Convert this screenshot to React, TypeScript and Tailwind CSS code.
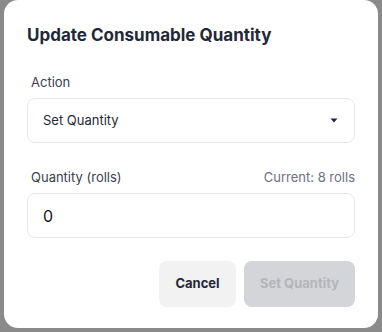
import { useState } from "react";

function Caret() {
  return (
    <svg width="8" height="5" viewBox="0 0 8 5" className="text-[#1f2937]">
      <path d="M0.5 0.5 H7.5 L4 4.5 Z" fill="currentColor" />
    </svg>
  );
}

export default function App() {
  const [quantity, setQuantity] = useState("0");

  return (
    <div
      className="w-[382px] h-[332px] bg-[#8a8a8a] px-[4px] pb-[4px] overflow-hidden"
      style={{ fontFamily: "Inter, 'Noto Sans', sans-serif" }}
    >
      <div className="w-[374px] h-[328px] bg-white rounded-[14px] pt-[21px] px-[23px] flex flex-col">
        {/* Header */}
        <h2 className="text-[17px] leading-[28px] font-bold text-[#1f2937]">
          Update Consumable Quantity
        </h2>

        {/* Action */}
        <div className="mt-[23px]">
          <div className="pl-1 text-[13px] leading-5 text-[#374151] mb-1.5">Action</div>
          <div className="h-[45px] border border-[#e5e7eb] rounded-lg pl-[15px] pr-[16px] flex items-center justify-between">
            <span className="text-[13px] text-[#1f2937]">Set Quantity</span>
            <Caret />
          </div>
        </div>

        {/* Quantity */}
        <div className="mt-6">
          <div className="flex items-center justify-between mb-1.5">
            <span className="pl-1 text-[13px] leading-5 text-[#374151]">Quantity (rolls)</span>
            <span className="text-[13px] leading-5 text-[#6b7280]">Current: 8 rolls</span>
          </div>
          <input
            value={quantity}
            onChange={(e) => setQuantity(e.target.value)}
            className="w-full h-[45px] border border-[#e5e7eb] rounded-lg pl-[15px] text-[16px] text-[#111827] outline-none"
          />
        </div>

        {/* Actions */}
        <div className="mt-[23px] flex justify-end gap-2">
          <button className="w-[77px] h-[46px] rounded-lg bg-[#f2f2f3] text-[13px] font-bold text-[#1f2937]">
            Cancel
          </button>
          <button
            disabled
            className="w-[111px] h-[46px] rounded-lg bg-[#d4d5d8] text-[13px] font-bold text-[#b3b5ba]"
          >
            Set Quantity
          </button>
        </div>
      </div>
    </div>
  );
}
